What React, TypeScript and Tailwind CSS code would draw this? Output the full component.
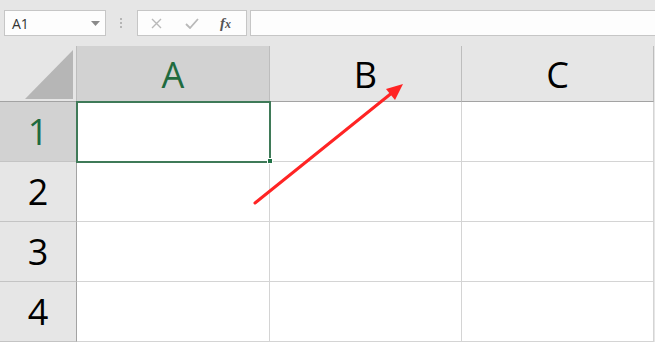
import { Fragment } from "react";

const rows = ["1", "2", "3", "4"];
const cols = ["A", "B", "C"];

const App = () => {
  return (
    <div className="relative w-[655px] h-[342px] overflow-hidden bg-[#e6e6e6] font-['Open_Sans',sans-serif]">
      {/* formula bar */}
      <div className="flex items-start h-[46px] pt-[10px] pl-[4px]">
        <div className="flex items-center justify-between w-[102px] h-[26px] bg-[#fdfdfd] border border-[#c6c6c6] pl-[7px] pr-[5px]">
          <span className="text-[14px] text-[#333]">A1</span>
          <svg width="9" height="5" viewBox="0 0 9 5">
            <path d="M0 0 L9 0 L4.5 5 Z" fill="#8a8a8a" />
          </svg>
        </div>
        <div className="flex flex-col items-center justify-center gap-[2px] w-[30px] h-[26px]">
          <span className="w-[2px] h-[2px] bg-[#b5b5b5]" />
          <span className="w-[2px] h-[2px] bg-[#b5b5b5]" />
          <span className="w-[2px] h-[2px] bg-[#b5b5b5]" />
        </div>
        <div className="flex items-center w-[110px] h-[26px] bg-[#fdfdfd] border border-[#c6c6c6] ml-[1px]">
          <svg className="ml-[13px]" width="11" height="11" viewBox="0 0 11 11">
            <path d="M1 1 L10 10 M10 1 L1 10" stroke="#b9b9b9" strokeWidth="1.4" />
          </svg>
          <svg className="ml-[23px]" width="14" height="11" viewBox="0 0 14 11">
            <path d="M1 6 L5 10 L13 1" stroke="#b9b9b9" strokeWidth="1.8" fill="none" />
          </svg>
          <span className="ml-[21px] text-[15px] italic font-bold text-[#555] font-['Liberation_Serif',serif] leading-none">
            f<span className="text-[12px]">x</span>
          </span>
        </div>
        <div className="flex-1 h-[26px] bg-[#fdfdfd] border border-[#c6c6c6] ml-[3px] border-r-0" />
      </div>

      {/* grid */}
      <div className="grid grid-cols-[77px_193px_192px_192px] grid-rows-[56px_60px_60px_60px_60px]">
        <div className="relative bg-[#e6e6e6] border-r border-b border-r-[#bdbdbd] border-b-[#a3a3a3]">
          <svg className="absolute left-[24px] top-[4px]" width="50" height="50" viewBox="0 0 50 50">
            <path d="M49 0 L49 49 L1 49 Z" fill="#b6b6b6" />
          </svg>
        </div>
        {cols.map((c, i) => (
          <div
            key={c}
            className={
              i === 0
                ? "flex items-center justify-center bg-[#d2d2d2] border-r border-b border-r-[#bdbdbd] border-b-[#a3a3a3] text-[36px] text-[#1f6b3f] pt-[2px]"
                : "flex items-center justify-center bg-[#e6e6e6] border-r border-b border-r-[#bdbdbd] border-b-[#a3a3a3] text-[36px] text-black pt-[2px]"
            }
          >
            {c}
          </div>
        ))}
        {rows.map((r, ri) => (
          <Fragment key={r}>
            <div
              className={
                ri === 0
                  ? "flex items-center justify-center bg-[#d2d2d2] border-r border-b border-r-[#a3a3a3] border-b-[#c4c4c4] text-[36px] text-[#1f6b3f]"
                  : "flex items-center justify-center bg-[#e6e6e6] border-r border-b border-r-[#a3a3a3] border-b-[#c4c4c4] text-[36px] text-black"
              }
            >
              {r}
            </div>
            {cols.map((c) => (
              <div key={c + r} className="bg-white border-r border-b border-[#d4d4d4]" />
            ))}
          </Fragment>
        ))}
      </div>

      {/* selection on A1 */}
      <div className="absolute left-[76px] top-[101px] w-[195px] h-[62px] border-2 border-[#3f7a58]" />
      <div className="absolute left-[267px] top-[158px] w-[6px] h-[6px] bg-[#217346] border border-white" />

      {/* red arrow annotation */}
      <svg className="absolute left-0 top-0" width="655" height="342" viewBox="0 0 655 342">
        <line x1="255" y1="203" x2="393" y2="92" stroke="#ff2424" strokeWidth="3" strokeLinecap="round" />
        <path d="M403 84 L386 89 L395 100 Z" fill="#ff2424" />
      </svg>
    </div>
  );
};

export default App;
